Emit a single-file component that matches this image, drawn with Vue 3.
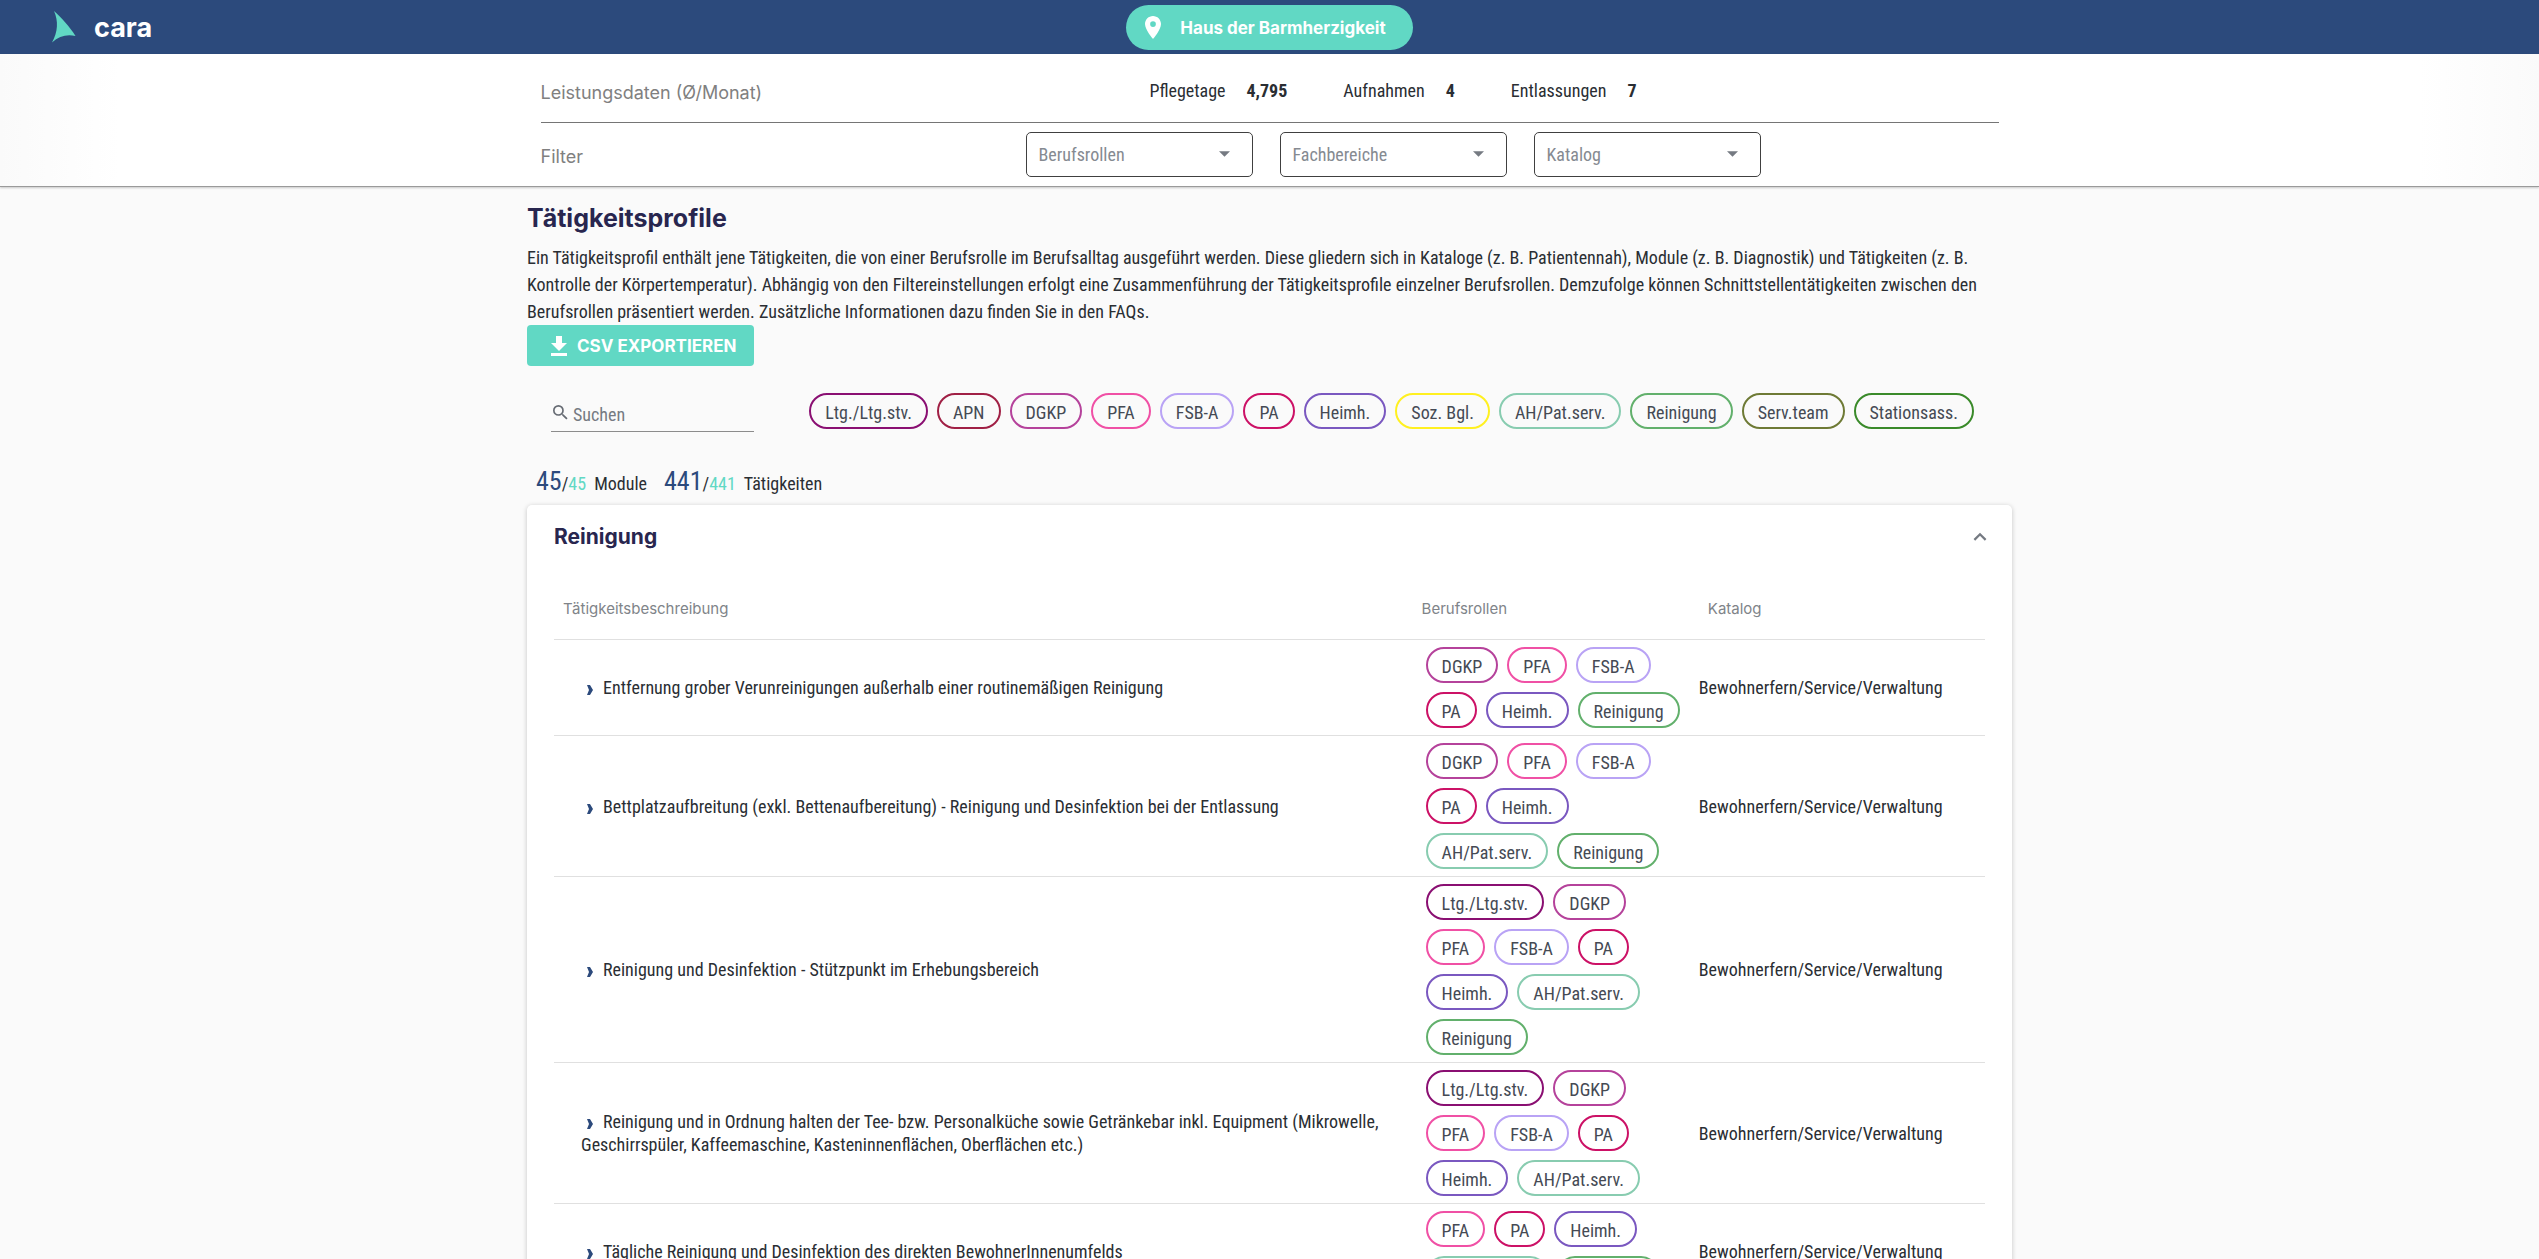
<script setup>
const roles = {
  'Ltg./Ltg.stv.': 'lead',
  APN: 'apn',
  DGKP: 'dgkp',
  PFA: 'pfa',
  'FSB-A': 'fsba',
  PA: 'pa',
  'Heimh.': 'heimh',
  'Soz. Bgl.': 'soz',
  'AH/Pat.serv.': 'ah',
  Reinigung: 'rein',
  'Serv.team': 'serv',
  'Stationsass.': 'stationsass',
}

const stats = [
  { label: 'Pflegetage', value: '4,795' },
  { label: 'Aufnahmen', value: '4' },
  { label: 'Entlassungen', value: '7' },
]

const filters = ['Berufsrollen', 'Fachbereiche', 'Katalog']

const catalogue = 'Bewohnerfern/Service/Verwaltung'

const rows = [
  {
    text: 'Entfernung grober Verunreinigungen außerhalb einer routinemäßigen Reinigung',
    roles: ['DGKP', 'PFA', 'FSB-A', 'PA', 'Heimh.', 'Reinigung'],
  },
  {
    text: 'Bettplatzaufbreitung (exkl. Bettenaufbereitung) - Reinigung und Desinfektion bei der Entlassung',
    roles: ['DGKP', 'PFA', 'FSB-A', 'PA', 'Heimh.', 'AH/Pat.serv.', 'Reinigung'],
  },
  {
    text: 'Reinigung und Desinfektion - Stützpunkt im Erhebungsbereich',
    roles: ['Ltg./Ltg.stv.', 'DGKP', 'PFA', 'FSB-A', 'PA', 'Heimh.', 'AH/Pat.serv.', 'Reinigung'],
  },
  {
    text: 'Reinigung und in Ordnung halten der Tee- bzw. Personalküche sowie Getränkebar inkl. Equipment (Mikrowelle, Geschirrspüler, Kaffeemaschine, Kasteninnenflächen, Oberflächen etc.)',
    roles: ['Ltg./Ltg.stv.', 'DGKP', 'PFA', 'FSB-A', 'PA', 'Heimh.', 'AH/Pat.serv.'],
  },
  {
    text: 'Tägliche Reinigung und Desinfektion des direkten BewohnerInnenumfelds',
    roles: ['PFA', 'PA', 'Heimh.', 'AH/Pat.serv.', 'Reinigung'],
  },
]
</script>

<template>
  <div class="page">
    <header class="topbar">
      <a class="brand" href="#">
        <svg class="brand-mark" viewBox="0 0 24 32" aria-hidden="true">
          <path d="M2 0C9 6 18 16 23.500 25C15 23 7 25 0 31.500C6 21 6.500 10 2 0Z" fill="#61d8c4" />
        </svg>
        <span class="brand-name">cara</span>
      </a>
      <button class="location" type="button">
        <svg class="pin" viewBox="5 2 14 20" aria-hidden="true">
          <path d="M12 2C8.130 2 5 5.130 5 9c0 5.250 7 13 7 13s7-7.750 7-13c0-3.870-3.130-7-7-7zm0 9.500a2.500 2.500 0 0 1 0-5 2.500 2.500 0 0 1 0 5z" fill="#fff" />
        </svg>
        <span>Haus der Barmherzigkeit</span>
      </button>
      <span></span>
    </header>

    <section class="subbar">
      <div class="subbar-inner">
        <div class="subrow stats-row">
          <h2 class="sublabel">Leistungsdaten (Ø/Monat)</h2>
          <dl class="stats">
            <div v-for="s in stats" :key="s.label" class="stat">
              <dt>{{ s.label }}</dt>
              <dd>{{ s.value }}</dd>
            </div>
          </dl>
        </div>
        <div class="subrow filter-row">
          <h2 class="sublabel">Filter</h2>
          <div class="filters">
            <div v-for="f in filters" :key="f" class="filter">
              <select :aria-label="f">
                <option>{{ f }}</option>
              </select>
              <svg class="caret" viewBox="0 0 10 5" aria-hidden="true">
                <path d="M0 0h10L5 5z" fill="#757a82" />
              </svg>
            </div>
          </div>
        </div>
      </div>
    </section>

    <main class="content">
      <h1>Tätigkeitsprofile</h1>
      <p class="intro">
        Ein Tätigkeitsprofil enthält jene Tätigkeiten, die von einer Berufsrolle im Berufsalltag
        ausgeführt werden. Diese gliedern sich in Kataloge (z. B. Patientennah), Module (z. B.
        Diagnostik) und Tätigkeiten (z. B. Kontrolle der Körpertemperatur). Abhängig von den
        Filtereinstellungen erfolgt eine Zusammenführung der Tätigkeitsprofile einzelner
        Berufsrollen. Demzufolge können Schnittstellentätigkeiten zwischen den Berufsrollen
        präsentiert werden. Zusätzliche Informationen dazu finden Sie in den FAQs.
      </p>
      <button class="export" type="button">
        <svg class="download" viewBox="0 0 16 20" aria-hidden="true">
          <path d="M5 0h6v7h5l-8 8-8-8h5zM0 17h16v3H0z" fill="#fff" />
        </svg>
        <span>CSV EXPORTIEREN</span>
      </button>

      <div class="tools">
        <label class="search">
          <svg class="glass" viewBox="3 3 18 18" aria-hidden="true">
            <path d="M15.500 14h-.79l-.28-.27A6.471 6.471 0 0 0 16 9.500 6.500 6.500 0 1 0 9.500 16c1.610 0 3.090-.59 4.230-1.570l.27.28v.79l5 4.990L20.490 19l-4.990-5zm-6 0C7.010 14 5 11.990 5 9.500S7.010 5 9.500 5 14 7.010 14 9.500 11.990 14 9.500 14z" fill="#666b73" />
          </svg>
          <input type="text" placeholder="Suchen" aria-label="Suchen" />
        </label>
        <div class="legend">
          <span v-for="(cls, name) in roles" :key="name" class="chip" :class="cls">{{ name }}</span>
        </div>
      </div>

      <p class="counts">
        <span><b>45</b>/<i>45</i></span>
        <span class="count-label">Module</span>
        <span><b>441</b>/<i>441</i></span>
        <span class="count-label">Tätigkeiten</span>
      </p>

      <section class="card">
        <div class="card-head">
          <h2>Reinigung</h2>
          <button class="toggle" type="button" aria-label="Reinigung einklappen">
            <svg viewBox="0 0 12 8" aria-hidden="true">
              <path d="M1 7l5-5 5 5" fill="none" stroke="#757a82" stroke-width="2" />
            </svg>
          </button>
        </div>
        <table>
          <thead>
            <tr>
              <th class="wide">Tätigkeitsbeschreibung</th>
              <th>Berufsrollen</th>
              <th>Katalog</th>
            </tr>
          </thead>
          <tbody>
            <tr v-for="r in rows" :key="r.text">
              <td class="desc">
                <svg class="arrow" viewBox="0 0 6 10" aria-hidden="true">
                  <path d="M0 0h3l3 5-3 5H0l2-5z" fill="#2c4a7c" />
                </svg>{{ r.text }}
              </td>
              <td class="roles">
                <div class="chips">
                  <span v-for="n in r.roles" :key="n" class="chip" :class="roles[n]">{{ n }}</span>
                </div>
              </td>
              <td>{{ catalogue }}</td>
            </tr>
          </tbody>
        </table>
      </section>
    </main>
  </div>
</template>

<style>
html,
body {
  margin: 0;
  background: #fafafa;
}
</style>

<style scoped>
.page {
  height: 100vh;
  overflow: hidden;
  background: #fafafa;
  color: #2a2e33;
  font-family: "Roboto Condensed", Roboto, sans-serif;
  font-size: 18px;
  line-height: 27px;
}

h1,
h2,
p,
dl,
dd {
  margin: 0;
}

button,
input,
select {
  font: inherit;
}

.topbar {
  display: grid;
  grid-template-columns: 1fr auto 1fr;
  align-items: center;
  height: 54px;
  background: #2c4a7c;
}

.brand {
  display: flex;
  align-items: center;
  gap: 18px;
  padding-left: 52px;
  color: #fff;
  text-decoration: none;
}

.brand-mark {
  width: 24px;
  height: 32px;
}

.brand-name {
  padding-top: 2px;
  font: 700 27px/32px Inter, sans-serif;
}

.location {
  display: flex;
  align-items: center;
  gap: 19px;
  height: 45px;
  padding: 0 27px 0 19px;
  border: 0;
  border-radius: 23px;
  background: #61d8c4;
  color: #fff;
  font: 700 17px/27px Inter, sans-serif;
}

.location span,
.export span {
  padding-top: 2px;
}

.pin {
  width: 16px;
  height: 23px;
}

.subbar {
  background: linear-gradient(90deg, #fafafa, #fff 120px, #fff calc(100% - 120px), #fafafa);
  border-bottom: 1px solid #9a9a9a;
  box-shadow: 0 1px 2px rgba(0, 0, 0, 0.2);
}

.subbar-inner {
  max-width: 1458px;
  margin: 0 auto;
}

.subrow {
  display: grid;
  grid-template-columns: 247px 1fr;
  align-items: center;
}

.stats-row {
  padding: 22px 0 17px;
  border-bottom: 1px solid #757575;
}

.filter-row {
  padding: 9px 0;
}

.sublabel {
  padding-top: 5px;
  color: #808080;
  font: 400 18px/24px Inter, sans-serif;
  white-space: nowrap;
}

.stats {
  display: flex;
  justify-content: center;
  gap: 56px;
}

.stat {
  display: flex;
  gap: 21px;
}

.stat dd {
  font-weight: 700;
}

.filters {
  display: flex;
  justify-content: center;
  gap: 27px;
}

.filter {
  position: relative;
  width: 227px;
}

.filter select {
  appearance: none;
  display: block;
  box-sizing: border-box;
  width: 100%;
  height: 45px;
  padding: 0 36px 0 12px;
  border: 1px solid #404040;
  border-radius: 5px;
  background: #fff;
  color: #858a91;
}

.caret {
  position: absolute;
  top: 19px;
  right: 23px;
  width: 11px;
  height: 6px;
  pointer-events: none;
}

.content {
  max-width: 1485px;
  margin: 0 auto;
  padding-top: 13px;
}

h1 {
  margin-bottom: 8px;
  color: #28264f;
  font: 700 25px/36px Inter, sans-serif;
}

.export {
  display: flex;
  align-items: center;
  gap: 10px;
  height: 41px;
  padding: 0 18px 0 24px;
  border: 0;
  border-radius: 4px;
  background: #61d8c4;
  color: #fff;
  font: 700 17px/27px Inter, sans-serif;
}

.download {
  width: 16px;
  height: 20px;
}

.tools {
  display: flex;
  justify-content: space-between;
  align-items: flex-start;
  margin-top: 27px;
  padding: 0 38px 0 24px;
}

.search {
  display: flex;
  align-items: center;
  gap: 5px;
  box-sizing: border-box;
  width: 203px;
  height: 39px;
  padding-left: 2px;
  border-bottom: 1px solid #8c8c8c;
}

.glass {
  width: 15px;
  height: 15px;
}

.search input {
  flex: 1;
  min-width: 0;
  padding: 4px 0 0;
  border: 0;
  outline: 0;
  background: none;
  color: #2a2e33;
}

.search input::placeholder {
  color: #757a82;
  opacity: 1;
}

.legend,
.chips {
  display: flex;
  flex-wrap: wrap;
  gap: 9px;
}

.chip {
  box-sizing: border-box;
  height: 36px;
  padding: 4px 14px 0;
  border: 2px solid;
  border-radius: 18px;
  color: #454a54;
  line-height: 27px;
  white-space: nowrap;
}

.lead { border-color: #8a0f72; }
.apn { border-color: #a02045; }
.dgkp { border-color: #b5429b; }
.pfa { border-color: #f050a5; }
.fsba { border-color: #b9a3f5; }
.pa { border-color: #cc1166; }
.heimh { border-color: #7a58c0; }
.soz { border-color: #fff020; }
.ah { border-color: #88ccb0; }
.rein { border-color: #62b06c; }
.serv { border-color: #6e7a35; }
.stationsass { border-color: #3a8a2a; }

.counts {
  display: flex;
  align-items: baseline;
  margin-top: 31px;
  padding-left: 9px;
  line-height: 36px;
}

.counts b {
  color: #2c4a7c;
  font-size: 26px;
  font-weight: 400;
}

.counts i {
  color: #61d8c4;
  font-style: normal;
}

.count-label {
  margin: 0 17px 0 8px;
}

.card {
  margin-top: 3px;
  padding: 0 27px;
  border-radius: 5px;
  background: #fff;
  box-shadow: 0 1px 5px rgba(0, 0, 0, 0.22);
}

.card-head {
  display: flex;
  align-items: center;
  justify-content: space-between;
  height: 63px;
  margin-right: -2px;
}

.card-head h2 {
  color: #28264f;
  font: 700 21px/27px Inter, sans-serif;
}

.toggle {
  display: flex;
  padding: 0;
  border: 0;
  background: none;
}

.toggle svg {
  width: 14px;
  height: 9px;
}

table {
  width: 100%;
  table-layout: fixed;
  border-collapse: separate;
  border-spacing: 0;
}

th {
  box-sizing: border-box;
  width: 20%;
  height: 72px;
  padding: 10px 9px 0;
  border-bottom: 1px solid #e0e0e0;
  color: #808489;
  font: 400 15px/24px Inter, sans-serif;
  text-align: left;
}

th.wide {
  width: 60%;
}

td {
  padding: 7px 0;
  border-bottom: 1px solid #e0e0e0;
  line-height: 23px;
}

td.desc {
  padding: 0 27px;
}

td.roles {
  padding: 7px 13px;
}

.arrow {
  width: 6px;
  height: 10px;
  margin: 0 10px 0 6px;
  vertical-align: -1px;
}
</style>
